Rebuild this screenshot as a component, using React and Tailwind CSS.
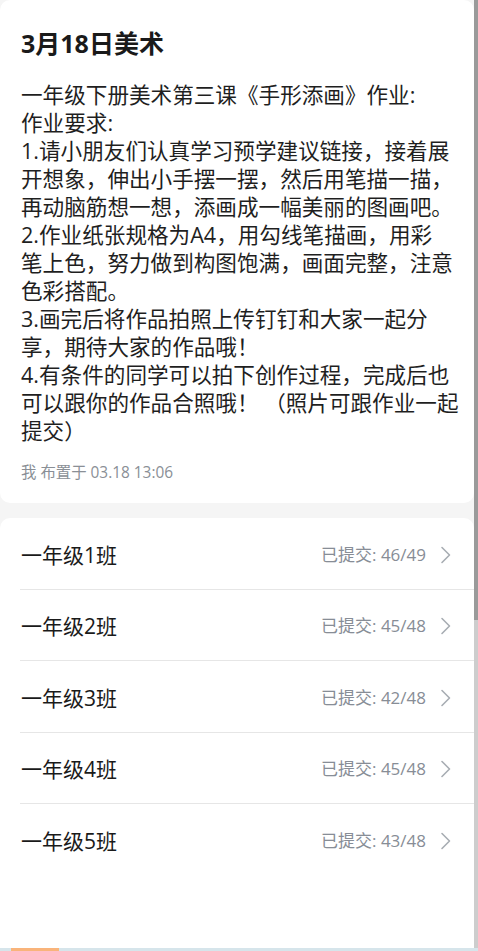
import React from "react";

const lines = [
  "一年级下册美术第三课《手形添画》作业:",
  "作业要求:",
  "1.请小朋友们认真学习预学建议链接，接着展",
  "开想象，伸出小手摆一摆，然后用笔描一描，",
  "再动脑筋想一想，添画成一幅美丽的图画吧。",
  "2.作业纸张规格为A4，用勾线笔描画，用彩",
  "笔上色，努力做到构图饱满，画面完整，注意",
  "色彩搭配。",
  "3.画完后将作品拍照上传钉钉和大家一起分",
  "享，期待大家的作品哦！",
  "4.有条件的同学可以拍下创作过程，完成后也",
  "可以跟你的作品合照哦！ （照片可跟作业一起",
  "提交）",
];

const classes = [
  ["一年级1班", "46/49"],
  ["一年级2班", "45/48"],
  ["一年级3班", "42/48"],
  ["一年级4班", "45/48"],
  ["一年级5班", "43/48"],
];

function Chevron() {
  return (
    <svg width="12" height="18" viewBox="0 0 12 18" fill="none">
      <path d="M2 1.5 L9.5 9 L2 16.5" stroke="#a8adb3" strokeWidth="1.6" strokeLinecap="round" strokeLinejoin="round" />
    </svg>
  );
}

export default function App() {
  return (
    <div
      className="flex h-[951px] w-[478px] flex-col overflow-hidden bg-[#f5f5f5]"
      style={{ fontFamily: '"Open Sans", "Noto Sans CJK SC", sans-serif' }}
    >
      <div className="flex min-h-0 flex-1">
        <div className="flex w-[474px] flex-col">
          <div className="rounded-b-[10px] rounded-t-[10px] bg-white px-[21px] pb-[20px] pt-[28px]">
            <div className="text-[25px] font-bold leading-[30px] text-[#1a1a1a]">3月18日美术</div>
            <div className="mt-[23px] text-[21.6px] leading-[28px] text-[#1f1f1f]">
              {lines.map((l, i) => (
                <div key={i} className="whitespace-nowrap">{l}</div>
              ))}
            </div>
            <div className="mt-[18px] text-[15.4px] leading-[20px] text-[#8a8f96]">我 布置于 03.18 13:06</div>
          </div>
          <div className="mt-[15px] flex-1 rounded-t-[10px] bg-white">
            {classes.map(([name, count], i) => (
              <div key={i} className="pl-[20px]">
                <div
                  className={
                    "flex h-[71.5px] items-center pt-[3px] pr-[22px] " +
                    (i < classes.length - 1 ? "border-b border-[#e6e6e6]" : "")
                  }
                >
                  <div className="flex-1 pl-[1px] text-[21px] leading-[28px] text-[#1a1a1a]">{name}</div>
                  <div className="text-[17px] leading-[22px] text-[#878d96]">已提交: {count}</div>
                  <div className="ml-[14px] flex items-center">
                    <Chevron />
                  </div>
                </div>
              </div>
            ))}
          </div>
        </div>
        <div className="flex w-[4px] flex-col bg-[#cdcdcd]">
          <div className="h-[620px] bg-[#9a9a9a]" />
        </div>
      </div>
      <div className="flex h-[3px] bg-[#d6e5eb]">
        <div className="ml-[11px] w-[48px] bg-[#f9b47b]" />
      </div>
    </div>
  );
}
